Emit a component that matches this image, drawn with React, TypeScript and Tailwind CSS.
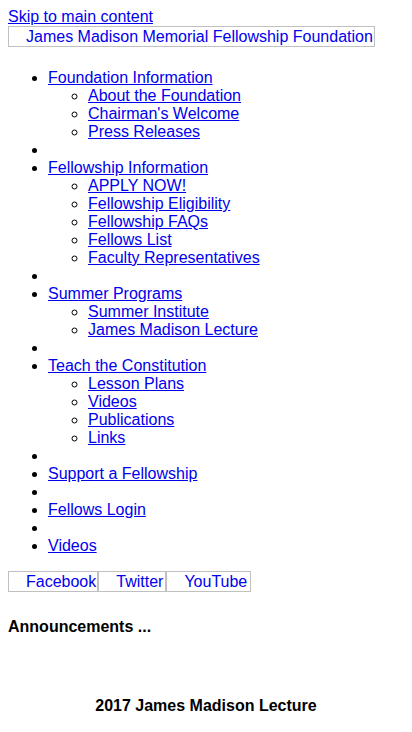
const topLinks = "text-[#0000ee] underline";

const Section = ({ title, items }: { title: string; items: string[] }) => (
  <li>
    <a href="#" className={topLinks}>
      {title}
    </a>
    <ul className="list-[circle] pl-10">
      {items.map((item) => (
        <li key={item}>
          <a href="#" className={topLinks}>
            {item}
          </a>
        </li>
      ))}
    </ul>
  </li>
);

const Spacer = () => <li className="h-[18px]"></li>;

const AltBox = ({ label, extra = "" }: { label: string; extra?: string }) => (
  <span
    className={
      "inline-block border border-[#c0c0c0] pl-[17px] pr-[1px] h-[21px] leading-[19px] text-[#0000ee] " + extra
    }
  >
    {label}
  </span>
);

export default function App() {
  return (
    <div className="m-2 bg-white text-black text-[16px] leading-[18px] font-['Liberation_Sans',Arial,sans-serif]">
      <a href="#" className={topLinks}>
        Skip to main content
      </a>
      <div className="mb-[22px]">
        <a href="#">
          <span className="inline-block border border-[#c0c0c0] pl-[17px] pr-[1px] h-[21px] leading-[19px] text-[#0000ee]">
            James Madison Memorial Fellowship Foundation
          </span>
        </a>
      </div>

      <ul className="list-disc pl-10 mt-[1px] mb-4">
        <Section
          title="Foundation Information"
          items={["About the Foundation", "Chairman's Welcome", "Press Releases"]}
        />
        <Spacer />
        <Section
          title="Fellowship Information"
          items={[
            "APPLY NOW!",
            "Fellowship Eligibility",
            "Fellowship FAQs",
            "Fellows List",
            "Faculty Representatives",
          ]}
        />
        <Spacer />
        <Section title="Summer Programs" items={["Summer Institute", "James Madison Lecture"]} />
        <Spacer />
        <Section
          title="Teach the Constitution"
          items={["Lesson Plans", "Videos", "Publications", "Links"]}
        />
        <Spacer />
        <li>
          <a href="#" className={topLinks}>
            Support a Fellowship
          </a>
        </li>
        <Spacer />
        <li>
          <a href="#" className={topLinks}>
            Fellows Login
          </a>
        </li>
        <Spacer />
        <li>
          <a href="#" className={topLinks}>
            Videos
          </a>
        </li>
      </ul>

      <div className="flex mt-[1px]">
        <AltBox label="Facebook" />
        <AltBox label="Twitter" extra="pr-[2px]" />
        <AltBox label="YouTube" extra="pr-[3px]" />
      </div>

      <h2 className="font-bold mt-[26px]">Announcements ...</h2>

      <h3 className="font-bold text-center mt-[61px]">2017 James Madison Lecture</h3>
    </div>
  );
}
